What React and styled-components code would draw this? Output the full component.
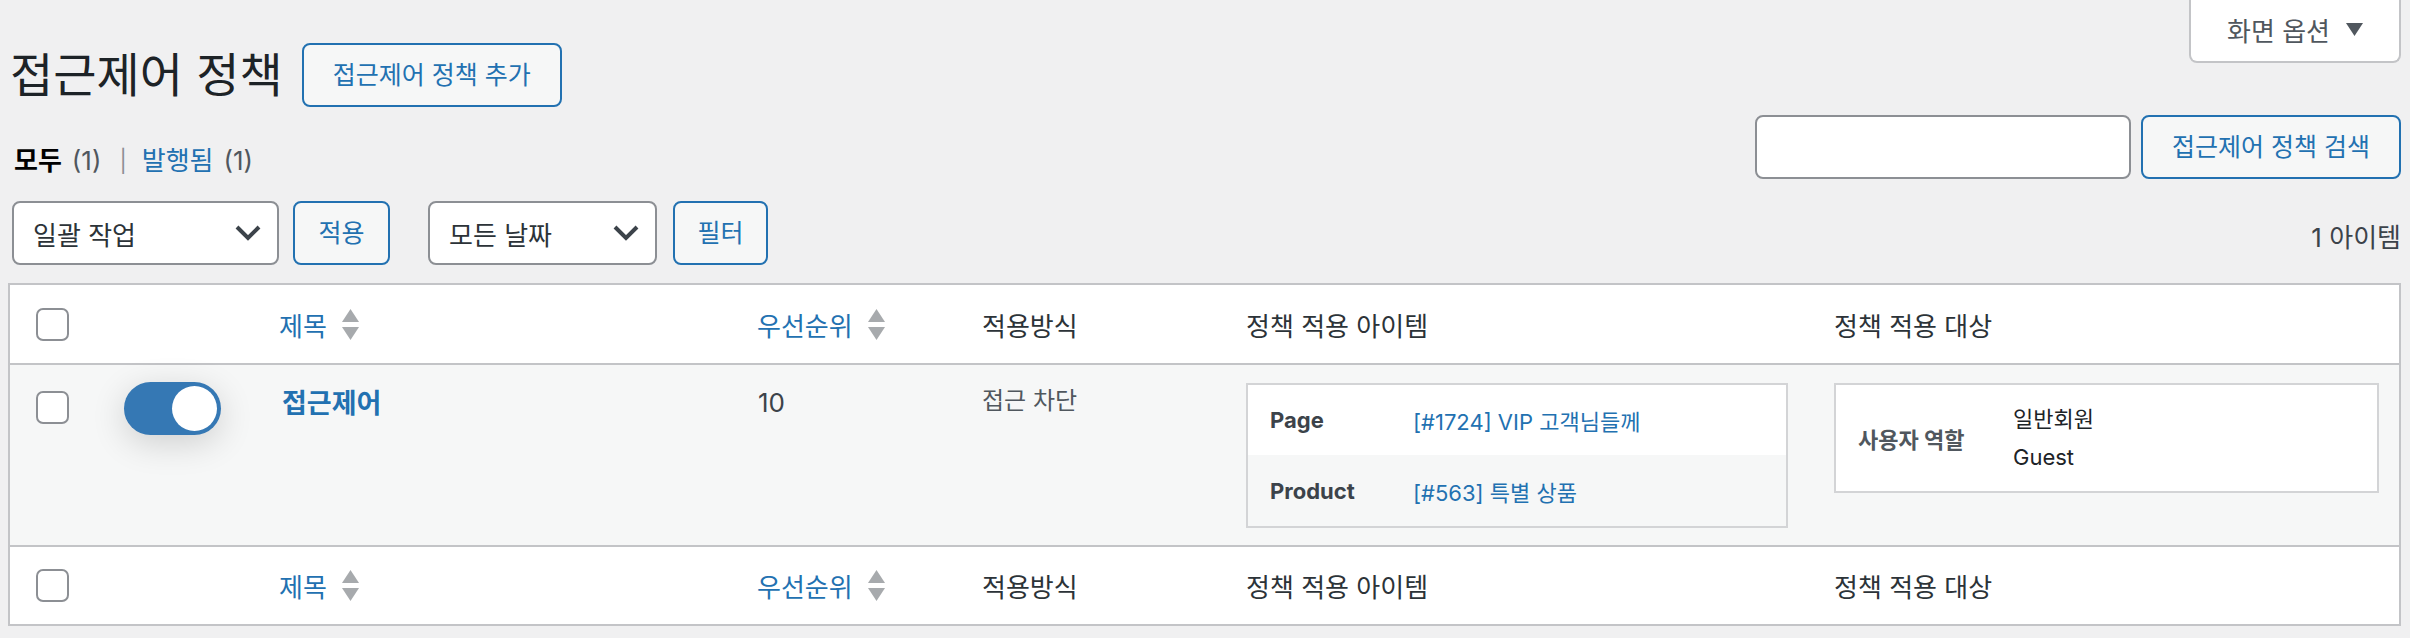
import React from 'react'
import styled, { createGlobalStyle } from 'styled-components'

const GlobalStyle = createGlobalStyle`
    * {
        box-sizing: border-box;
    }
    html, body {
        margin: 0;
        padding: 0;
        background: #f0f0f1;
    }
    body {
        font-family: Inter, "Noto Sans CJK KR", sans-serif;
        color: #3c434a;
    }
`

const SortArrows = () => (
    <svg width="17" height="31" viewBox="0 0 17 31">
        <polygon points="0,13 8.5,0 17,13" fill="#a7aaad" />
        <polygon points="0,18 17,18 8.5,31" fill="#a7aaad" />
    </svg>
)

const Chevron = () => (
    <svg width="26" height="16" viewBox="0 0 26 16">
        <polyline points="2,2 13,13 24,2" fill="none" stroke="#3c434a" strokeWidth="4" />
    </svg>
)

const HeadRow = ({ footer }) => (
    <HeaderRow $footer={footer}>
        <CheckCell>
            <Checkbox />
        </CheckCell>
        <HeadCell />
        <HeadCell>
            <SortLink>제목</SortLink>
            <SortArrows />
        </HeadCell>
        <HeadCell>
            <SortLink>우선순위</SortLink>
            <SortArrows />
        </HeadCell>
        <HeadCell>적용방식</HeadCell>
        <HeadCell>정책 적용 아이템</HeadCell>
        <HeadCell>정책 적용 대상</HeadCell>
    </HeaderRow>
)

const items = [
    { type: 'Page', label: '[#1724] VIP 고객님들께' },
    { type: 'Product', label: '[#563] 특별 상품' }
]

const App = () => {
    return (
        <Page>
            <GlobalStyle />
            <Top>
                <TopLeft>
                    <TitleRow>
                        <Title>접근제어 정책</Title>
                        <Button $width={260}>접근제어 정책 추가</Button>
                    </TitleRow>
                    <SubSub>
                        <Current>모두</Current>
                        <Count>(1)</Count>
                        <Sep>|</Sep>
                        <SubLink>발행됨</SubLink>
                        <Count>(1)</Count>
                    </SubSub>
                </TopLeft>
                <TopRight>
                    <ScreenTab>
                        화면 옵션
                        <svg width="17" height="13" viewBox="0 0 17 13">
                            <polygon points="0,0 17,0 8.5,13" fill="#50575e" />
                        </svg>
                    </ScreenTab>
                    <SearchRow>
                        <SearchInput />
                        <Button $width={260}>접근제어 정책 검색</Button>
                    </SearchRow>
                </TopRight>
            </Top>

            <TableNav>
                <Select $width={267} $offset={4}>
                    일괄 작업
                    <Chevron />
                </Select>
                <Button $width={97} $offset={14}>적용</Button>
                <Select $width={229} $offset={38}>
                    모든 날짜
                    <Chevron />
                </Select>
                <Button $width={95} $offset={16}>필터</Button>
                <ItemCount>1 아이템</ItemCount>
            </TableNav>

            <Table>
                <HeadRow />
                <BodyRow>
                    <CheckCell $top={26}>
                        <Checkbox />
                    </CheckCell>
                    <ToggleCell>
                        <Toggle>
                            <Knob />
                        </Toggle>
                    </ToggleCell>
                    <Cell $left={23} $top={21}>
                        <RowTitle>접근제어</RowTitle>
                    </Cell>
                    <Cell $left={21} $top={19}>
                        <Priority>10</Priority>
                    </Cell>
                    <Cell $top={19}>
                        <Method>접근 차단</Method>
                    </Cell>
                    <Cell $right={26}>
                        <InfoBox>
                            {items.map((item, i) => (
                                <ItemLine key={item.type} $alt={i % 2 === 1}>
                                    <InfoLabel>{item.type}</InfoLabel>
                                    <InfoLink>{item.label}</InfoLink>
                                </ItemLine>
                            ))}
                        </InfoBox>
                    </Cell>
                    <Cell>
                        <TargetBox>
                            <InfoLabel $muted>사용자 역할</InfoLabel>
                            <Values>
                                <span>일반회원</span>
                                <span>Guest</span>
                            </Values>
                        </TargetBox>
                    </Cell>
                </BodyRow>
                <HeadRow footer />
            </Table>
        </Page>
    )
}

export default App

const Page = styled.div`
    width: 2410px;
    height: 638px;
    padding: 0 9px 0 8px;
    overflow: hidden;
`

const Top = styled.div`
    display: flex;
    justify-content: space-between;
    align-items: flex-start;
`

const TopLeft = styled.div`
    display: flex;
    flex-direction: column;
`

const TitleRow = styled.div`
    display: flex;
    align-items: center;
    gap: 19px;
    margin-top: 43px;
    padding-left: 2px;
`

const Title = styled.h1`
    margin: 0;
    font-size: 47px;
    font-weight: 400;
    line-height: 64px;
    color: #1d2327;
`

const Button = styled.button`
    width: ${p => p.$width}px;
    height: 64px;
    margin-left: ${p => p.$offset || 0}px;
    padding: 0;
    border: 2px solid #2271b1;
    border-radius: 8px;
    background: #f6f7f7;
    color: #2271b1;
    font-family: inherit;
    font-size: 25px;
    line-height: 1;
    display: flex;
    align-items: center;
    justify-content: center;
    flex-shrink: 0;
`

const SubSub = styled.div`
    margin-top: 36px;
    padding-left: 6px;
    display: flex;
    align-items: center;
    font-size: 26px;
    line-height: 36px;
`

const Current = styled.span`
    font-weight: 700;
    color: #000;
`

const Count = styled.span`
    color: #50575e;
    margin-left: 10px;
`

const Sep = styled.span`
    color: #8c8f94;
    font-size: 22px;
    margin: 0 15px 0 18px;
`

const SubLink = styled.span`
    color: #2271b1;
`

const TopRight = styled.div`
    display: flex;
    flex-direction: column;
    align-items: flex-end;
`

const ScreenTab = styled.div`
    width: 212px;
    height: 63px;
    border: 2px solid #c3c4c7;
    border-top: none;
    border-radius: 0 0 8px 8px;
    background: #fff;
    display: flex;
    align-items: center;
    justify-content: center;
    gap: 16px;
    padding-bottom: 2px;
    font-size: 26px;
    color: #50575e;
`

const SearchRow = styled.div`
    display: flex;
    gap: 10px;
    margin-top: 52px;
`

const SearchInput = styled.div`
    width: 376px;
    height: 64px;
    border: 2px solid #8c8f94;
    border-radius: 8px;
    background: #fff;
`

const TableNav = styled.div`
    display: flex;
    align-items: center;
    height: 64px;
    margin-top: 22px;
`

const Select = styled.div`
    width: ${p => p.$width}px;
    height: 64px;
    margin-left: ${p => p.$offset}px;
    padding: 0 16px 0 19px;
    border: 2px solid #8c8f94;
    border-radius: 8px;
    background: #fff;
    display: flex;
    align-items: center;
    justify-content: space-between;
    font-size: 26px;
    color: #2c3338;
    flex-shrink: 0;
`

const ItemCount = styled.div`
    margin-left: auto;
    font-size: 26px;
    color: #3c434a;
    padding-top: 4px;
`

const Table = styled.div`
    margin-top: 18px;
    border: 2px solid #c3c4c7;
    background: #fff;
`

const gridColumns = `90px 159px 478px 225px 264px 588px 1fr`

const HeaderRow = styled.div`
    display: grid;
    grid-template-columns: ${gridColumns};
    align-items: center;
    height: ${p => (p.$footer ? 79 : 80)}px;
    border-bottom: ${p => (p.$footer ? 'none' : '2px solid #c3c4c7')};
    border-top: ${p => (p.$footer ? '2px solid #c3c4c7' : 'none')};
`

const HeadCell = styled.div`
    display: flex;
    align-items: center;
    gap: 15px;
    padding: 0 20px;
    font-size: 26px;
    color: #2c3338;
    white-space: nowrap;
`

const SortLink = styled.span`
    color: #2271b1;
`

const CheckCell = styled.div`
    padding: ${p => p.$top || 0}px 0 0 26px;
    display: flex;
    align-self: ${p => (p.$top ? 'start' : 'center')};
`

const Checkbox = styled.span`
    display: block;
    width: 33px;
    height: 33px;
    border: 2px solid #8c8f94;
    border-radius: 7px;
    background: #fff;
`

const BodyRow = styled.div`
    display: grid;
    grid-template-columns: ${gridColumns};
    align-items: start;
    background: #f6f7f7;
`

const Cell = styled.div`
    padding: ${p => p.$top || 18}px ${p => p.$right || 20}px 17px ${p => p.$left || 20}px;
`

const ToggleCell = styled.div`
    padding: 17px 0 0 24px;
`

const Toggle = styled.div`
    width: 97px;
    height: 53px;
    border-radius: 27px;
    background: #3578b4;
    padding: 4px;
    display: flex;
    justify-content: flex-end;
    box-shadow: 0 8px 34px rgba(0, 0, 0, 0.16);
`

const Knob = styled.div`
    width: 45px;
    height: 45px;
    border-radius: 50%;
    background: #fff;
`

const RowTitle = styled.div`
    font-size: 27px;
    font-weight: 700;
    line-height: 36px;
    color: #2271b1;
`

const Priority = styled.div`
    font-size: 26px;
    line-height: 38px;
    color: #3c434a;
`

const Method = styled.div`
    font-size: 24px;
    line-height: 34px;
    color: #50575e;
`

const InfoBox = styled.div`
    border: 2px solid #d3d4d6;
    background: #fff;
`

const ItemLine = styled.div`
    display: grid;
    grid-template-columns: 143px 1fr;
    align-items: center;
    height: ${p => (p.$alt ? 71 : 70)}px;
    padding: 0 22px;
    background: ${p => (p.$alt ? '#f6f7f7' : '#fff')};
`

const InfoLabel = styled.span`
    font-size: 22px;
    font-weight: 700;
    color: ${p => (p.$muted ? '#50575e' : '#3c434a')};
    white-space: nowrap;
`

const InfoLink = styled.span`
    font-size: 22px;
    color: #2271b1;
    white-space: nowrap;
`

const TargetBox = styled.div`
    display: grid;
    grid-template-columns: 155px 1fr;
    align-items: center;
    height: 110px;
    padding: 0 22px;
    border: 2px solid #d3d4d6;
    background: #fff;
`

const Values = styled.div`
    display: flex;
    flex-direction: column;
    font-size: 22px;
    line-height: 38px;
    color: #1d2327;
`
